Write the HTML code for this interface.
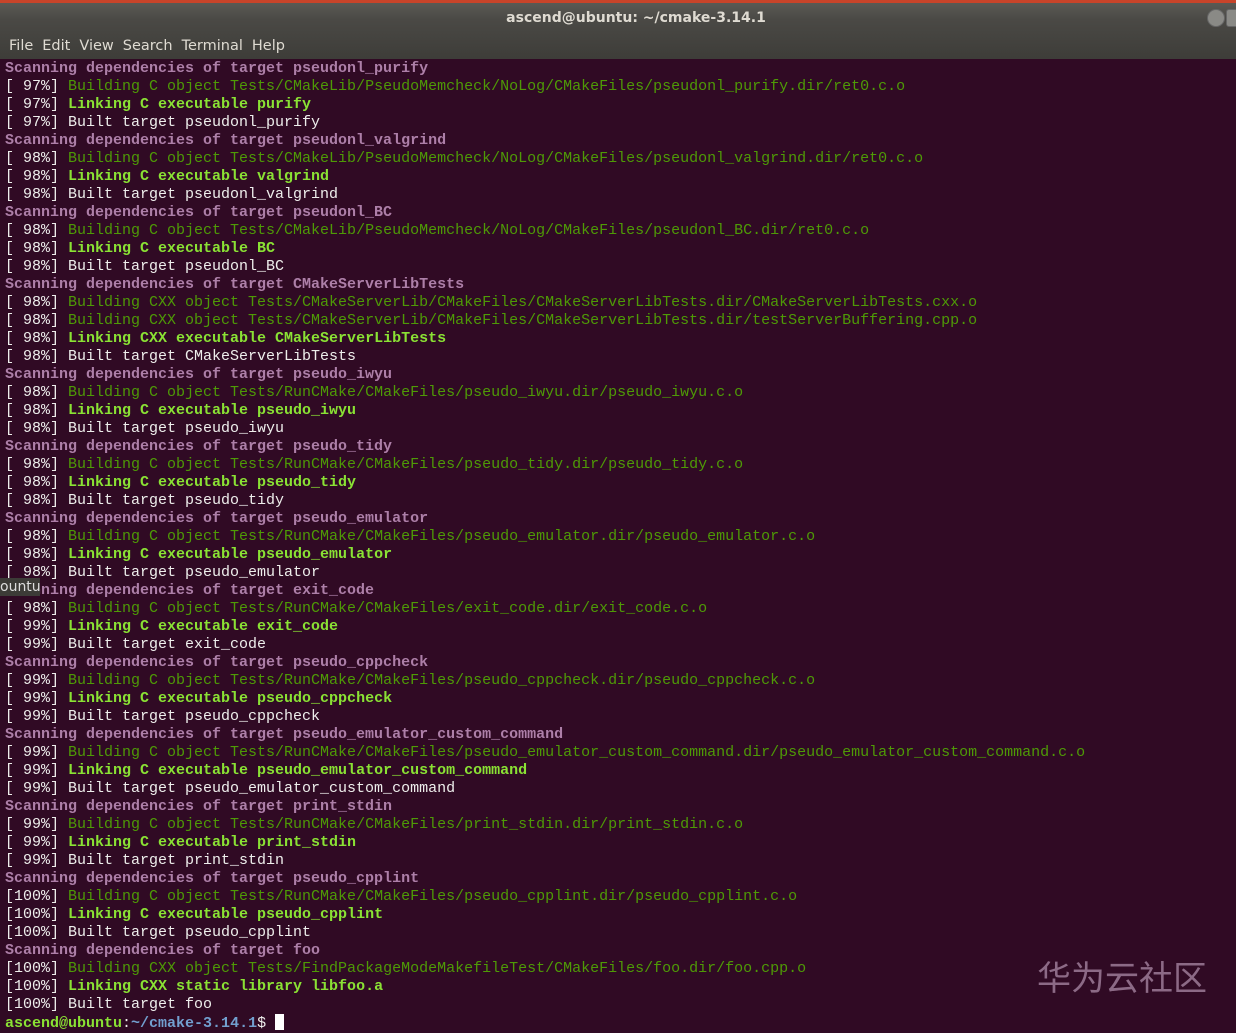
<!DOCTYPE html><html><head><meta charset="utf-8"><style>
html,body{margin:0;padding:0;width:1236px;height:1031px;overflow:hidden;background:#300a24}
#top{position:absolute;left:0;top:0;width:1236px;height:59px;background:linear-gradient(#5a5a54 3px,#4a4945 20px,#3e3d39 58px);}
#red{position:absolute;left:0;top:0;width:1236px;height:3px;background:#c8442a}
#title{position:absolute;top:10px;left:0;width:1272px;text-align:center;color:#dfdbd2;font:bold 14px "DejaVu Sans",sans-serif}
#menu{position:absolute;top:38px;left:9px;color:#dfdbd2;font:14.5px "DejaVu Sans",sans-serif;word-spacing:2px}
#menu span{margin-right:9px}
.btn{position:absolute;top:9px;width:16px;height:16px;border-radius:50%;background:#8a8a86;border:1px solid #666}
#term{position:absolute;left:5px;top:60px;font:15px/18px "Liberation Mono",monospace;color:#eeeeec;white-space:pre}
.s{color:#ad7fa8;font-weight:bold}.b{color:#4e9a06}.l{color:#8ae234;font-weight:bold}
.u{color:#8ae234;font-weight:bold}.p{color:#729fcf;font-weight:bold}
#cur{display:inline-block;width:9px;height:16px;background:#fff;vertical-align:-3px}
#wm{position:absolute;left:1037px;top:951px;color:#8c6a86;font:34px "Noto Sans CJK SC",sans-serif}
#tip{position:absolute;left:0;top:578px;width:40px;height:18px;background:#3c3b37;color:#ddd;font:14px "DejaVu Sans",sans-serif;line-height:18px}
</style></head><body>
<div id="top"></div><div id="red"></div>
<div id="title">ascend@ubuntu: ~/cmake-3.14.1</div>
<div class="btn" style="left:1207px"></div><div class="btn" style="left:1226px;border-radius:3px"></div>
<div id="menu"><span>File</span><span>Edit</span><span>View</span><span>Search</span><span>Terminal</span><span>Help</span></div>
<div id="term"><span class="s">Scanning dependencies of target pseudonl_purify</span>
[ 97%] <span class="b">Building C object Tests/CMakeLib/PseudoMemcheck/NoLog/CMakeFiles/pseudonl_purify.dir/ret0.c.o</span>
[ 97%] <span class="l">Linking C executable purify</span>
[ 97%] Built target pseudonl_purify
<span class="s">Scanning dependencies of target pseudonl_valgrind</span>
[ 98%] <span class="b">Building C object Tests/CMakeLib/PseudoMemcheck/NoLog/CMakeFiles/pseudonl_valgrind.dir/ret0.c.o</span>
[ 98%] <span class="l">Linking C executable valgrind</span>
[ 98%] Built target pseudonl_valgrind
<span class="s">Scanning dependencies of target pseudonl_BC</span>
[ 98%] <span class="b">Building C object Tests/CMakeLib/PseudoMemcheck/NoLog/CMakeFiles/pseudonl_BC.dir/ret0.c.o</span>
[ 98%] <span class="l">Linking C executable BC</span>
[ 98%] Built target pseudonl_BC
<span class="s">Scanning dependencies of target CMakeServerLibTests</span>
[ 98%] <span class="b">Building CXX object Tests/CMakeServerLib/CMakeFiles/CMakeServerLibTests.dir/CMakeServerLibTests.cxx.o</span>
[ 98%] <span class="b">Building CXX object Tests/CMakeServerLib/CMakeFiles/CMakeServerLibTests.dir/testServerBuffering.cpp.o</span>
[ 98%] <span class="l">Linking CXX executable CMakeServerLibTests</span>
[ 98%] Built target CMakeServerLibTests
<span class="s">Scanning dependencies of target pseudo_iwyu</span>
[ 98%] <span class="b">Building C object Tests/RunCMake/CMakeFiles/pseudo_iwyu.dir/pseudo_iwyu.c.o</span>
[ 98%] <span class="l">Linking C executable pseudo_iwyu</span>
[ 98%] Built target pseudo_iwyu
<span class="s">Scanning dependencies of target pseudo_tidy</span>
[ 98%] <span class="b">Building C object Tests/RunCMake/CMakeFiles/pseudo_tidy.dir/pseudo_tidy.c.o</span>
[ 98%] <span class="l">Linking C executable pseudo_tidy</span>
[ 98%] Built target pseudo_tidy
<span class="s">Scanning dependencies of target pseudo_emulator</span>
[ 98%] <span class="b">Building C object Tests/RunCMake/CMakeFiles/pseudo_emulator.dir/pseudo_emulator.c.o</span>
[ 98%] <span class="l">Linking C executable pseudo_emulator</span>
[ 98%] Built target pseudo_emulator
<span class="s">Scanning dependencies of target exit_code</span>
[ 98%] <span class="b">Building C object Tests/RunCMake/CMakeFiles/exit_code.dir/exit_code.c.o</span>
[ 99%] <span class="l">Linking C executable exit_code</span>
[ 99%] Built target exit_code
<span class="s">Scanning dependencies of target pseudo_cppcheck</span>
[ 99%] <span class="b">Building C object Tests/RunCMake/CMakeFiles/pseudo_cppcheck.dir/pseudo_cppcheck.c.o</span>
[ 99%] <span class="l">Linking C executable pseudo_cppcheck</span>
[ 99%] Built target pseudo_cppcheck
<span class="s">Scanning dependencies of target pseudo_emulator_custom_command</span>
[ 99%] <span class="b">Building C object Tests/RunCMake/CMakeFiles/pseudo_emulator_custom_command.dir/pseudo_emulator_custom_command.c.o</span>
[ 99%] <span class="l">Linking C executable pseudo_emulator_custom_command</span>
[ 99%] Built target pseudo_emulator_custom_command
<span class="s">Scanning dependencies of target print_stdin</span>
[ 99%] <span class="b">Building C object Tests/RunCMake/CMakeFiles/print_stdin.dir/print_stdin.c.o</span>
[ 99%] <span class="l">Linking C executable print_stdin</span>
[ 99%] Built target print_stdin
<span class="s">Scanning dependencies of target pseudo_cpplint</span>
[100%] <span class="b">Building C object Tests/RunCMake/CMakeFiles/pseudo_cpplint.dir/pseudo_cpplint.c.o</span>
[100%] <span class="l">Linking C executable pseudo_cpplint</span>
[100%] Built target pseudo_cpplint
<span class="s">Scanning dependencies of target foo</span>
[100%] <span class="b">Building CXX object Tests/FindPackageModeMakefileTest/CMakeFiles/foo.dir/foo.cpp.o</span>
[100%] <span class="l">Linking CXX static library libfoo.a</span>
[100%] Built target foo
<span class="u">ascend@ubuntu</span>:<span class="p">~/cmake-3.14.1</span>$ <span id="cur"></span></div>
<div id="tip">ountu</div>
<div id="wm">华为云社区</div>
</body></html>
